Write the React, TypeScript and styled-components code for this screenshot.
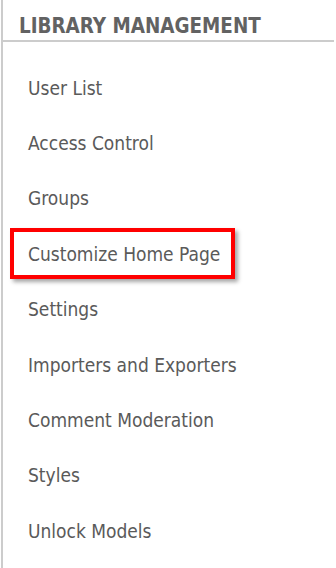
import React from "react";
import styled, { createGlobalStyle } from "styled-components";

const GlobalStyle = createGlobalStyle`
    html, body {
        margin: 0;
        padding: 0;
        background: #fff;
    }
`;

const Sidebar = styled.nav`
    box-sizing: border-box;
    width: 333px;
    height: 568px;
    margin-left: 1px;
    border-left: 2px solid #cccccc;
    font-family: "DejaVu Sans Condensed", "DejaVu Sans", Tahoma, sans-serif;
`;

const Header = styled.h2`
    margin: 0;
    height: 42px;
    padding: 16px 0 0 16px;
    box-sizing: border-box;
    border-bottom: 2px solid #cccccc;
    font-size: 20.4px;
    font-weight: bold;
    color: #626262;
    line-height: 20px;
`;

const List = styled.ul`
    list-style: none;
    margin: 0;
    padding: 18px 0 0 0;
`;

const Item = styled.li`
    height: 55.4px;
    display: flex;
    align-items: center;
`;

const Link = styled.a<{ $highlight?: boolean }>`
    display: inline-block;
    margin-left: ${(p) => (p.$highlight ? "7px" : "25px")};
    padding: ${(p) => (p.$highlight ? "10.5px 11px 10.5px 14px" : "0")};
    border: ${(p) => (p.$highlight ? "4px solid #ff0000" : "none")};
    box-shadow: ${(p) => (p.$highlight ? "3px 3px 4px rgba(0,0,0,0.35)" : "none")};
    font-size: 19px;
    color: #5a5a5a;
    text-decoration: none;
    line-height: 22px;
`;

const items = [
    "User List",
    "Access Control",
    "Groups",
    "Customize Home Page",
    "Settings",
    "Importers and Exporters",
    "Comment Moderation",
    "Styles",
    "Unlock Models",
];

export default function App() {
    return (
        <>
            <GlobalStyle />
            <Sidebar>
                <Header>LIBRARY MANAGEMENT</Header>
                <List>
                    {items.map((label) => (
                        <Item key={label}>
                            <Link href="#" $highlight={label === "Customize Home Page"}>
                                {label}
                            </Link>
                        </Item>
                    ))}
                </List>
            </Sidebar>
        </>
    );
}
